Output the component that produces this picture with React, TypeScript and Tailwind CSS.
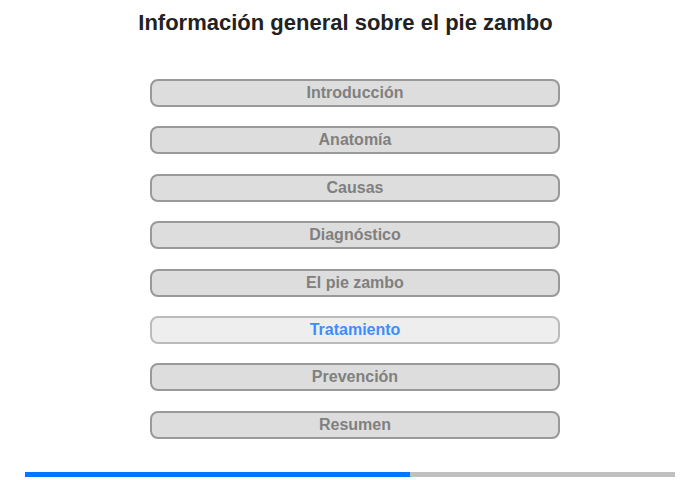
import React from "react";

const items = [
  "Introducción",
  "Anatomía",
  "Causas",
  "Diagnóstico",
  "El pie zambo",
  "Tratamiento",
  "Prevención",
  "Resumen",
];

export default function App() {
  return (
    <div
      className="w-[700px] h-[480px] bg-white overflow-hidden"
      style={{ fontFamily: '"Liberation Sans", Arial, sans-serif' }}
    >
      <div className="pt-[9px] h-[79px]">
        <h1 className="text-[22px] leading-[28px] font-bold text-[#222222] text-center pr-[9px]">
          Información general sobre el pie zambo
        </h1>
      </div>
      <div className="flex flex-col gap-[19.4px] pl-[150px]">
        {items.map((it) => {
          const active = it === "Tratamiento";
          return (
            <div
              key={it}
              className={
                active
                  ? "w-[410px] h-[28px] rounded-[8px] border-2 border-[#bbbbbb] bg-[#eeeeee] text-[#3d8eff] text-[16px] font-bold flex items-center justify-center leading-none"
                  : "w-[410px] h-[28px] rounded-[8px] border-2 border-[#999999] bg-[#dddddd] text-[#808080] text-[16px] font-bold flex items-center justify-center leading-none"
              }
            >
              {it}
            </div>
          );
        })}
      </div>
      <div className="mt-[33px] ml-[25px] w-[650px] h-[5px] bg-[#c0c0c0] flex">
        <div className="w-[385px] h-[5px] bg-[#0077ff]" />
      </div>
    </div>
  );
}
